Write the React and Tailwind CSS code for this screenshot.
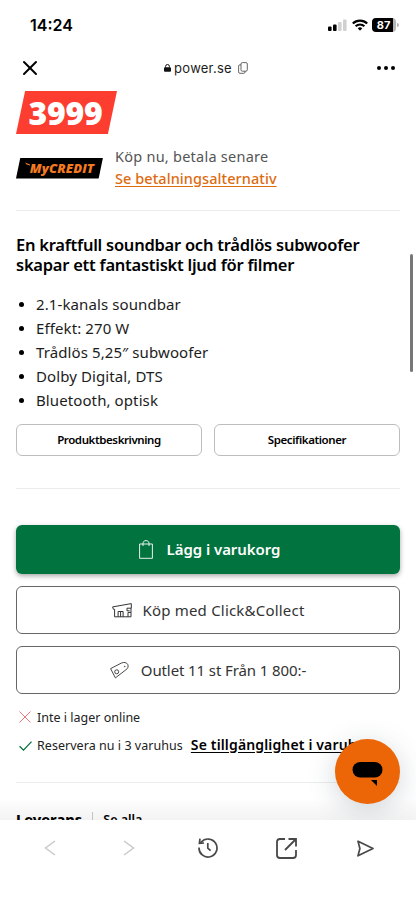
import { X } from "lucide-react";

const features = [
  "2.1-kanals soundbar",
  "Effekt: 270 W",
  "Trådlös 5,25″ subwoofer",
  "Dolby Digital, DTS",
  "Bluetooth, optisk",
];

function StatusBar() {
  return (
    <div className="flex h-[50px] shrink-0 items-center justify-between pl-[30px] pr-[17px] font-['Inter',sans-serif]">
      <span className="text-[16px] font-semibold leading-5">14:24</span>
      <div className="flex items-center">
        <svg className="h-3 w-[19px]" viewBox="0 0 19 12">
          <rect x="0" y="7.5" width="3.6" height="4.5" rx="1" fill="#000" />
          <rect x="5" y="5.5" width="3.6" height="6.5" rx="1" fill="#000" />
          <rect x="10" y="3" width="3.6" height="9" rx="1" fill="#d0d0d0" />
          <rect x="15" y="0.5" width="3.6" height="11.5" rx="1" fill="#d0d0d0" />
        </svg>
        <svg className="ml-[5px] h-3 w-4" viewBox="0 0 16 12" fill="none" stroke="#000" strokeWidth="2.1">
          <path d="M0.8 4.6a10.2 10.2 0 0 1 14.4 0" />
          <path d="M3.6 7.3a6.2 6.2 0 0 1 8.8 0" />
          <path d="M5.7 9.3a3.3 3.3 0 0 1 4.6 0L8 11.7z" fill="#000" stroke="none" />
        </svg>
        <div className="ml-1 flex h-[14px] w-[24px] items-center justify-center rounded-[4px] bg-linear-to-r from-black from-88% to-[#b5b5b5] to-88% pt-px pr-px text-[11px] font-bold leading-none text-white">
          87
        </div>
        <div className="ml-px h-1 w-[2px] rounded-r-full bg-[#b5b5b5]" />
      </div>
    </div>
  );
}

function BrowserBar() {
  return (
    <div className="flex h-9 shrink-0 items-center justify-between pl-[22px] pr-[21px]">
      <X className="h-4 w-4" strokeWidth={2} viewBox="4 4 16 16" overflow="visible" />
      <div className="flex items-center pr-[3px] font-['Inter',sans-serif] text-[13px] leading-5 tracking-[0.25px] text-[#1c1c1c]">
        <svg className="mr-[3px] h-2 w-[7px]" viewBox="0 0 7 8">
          <rect x="0" y="3.2" width="7" height="4.6" rx="1" fill="#111" />
          <path d="M1.6 3.6V2.4a1.9 1.9 0 0 1 3.8 0v1.2" fill="none" stroke="#111" strokeWidth="1" />
        </svg>
        <span>power.se</span>
        <svg className="ml-1.5 h-3 w-[10px]" viewBox="0 0 10 12" fill="none" stroke="#555" strokeWidth="0.9">
          <rect x="3" y="0.6" width="6.3" height="8.6" rx="1.4" />
          <path d="M3 2.8H1.9A1.3 1.3 0 0 0 .6 4.1v5.8a1.4 1.4 0 0 0 1.4 1.4h3.8a1.3 1.3 0 0 0 1.3-1.3v-.8" />
        </svg>
      </div>
      <div className="flex gap-[3px]">
        <span className="h-1 w-1 rounded-full bg-black" />
        <span className="h-1 w-1 rounded-full bg-black" />
        <span className="h-1 w-1 rounded-full bg-black" />
      </div>
    </div>
  );
}

function BagIcon() {
  return (
    <svg className="h-[19px] w-[14px]" viewBox="0 0 14 19" fill="none" stroke="#fff" strokeWidth="0.9">
      <path d="M.6 4h12.8v14.3H.6z" />
      <path d="M4 6V3.2C4 1.6 5.3.6 7 .6s3 1 3 2.6V6" />
    </svg>
  );
}

function StoreIcon() {
  return (
    <svg className="h-[15px] w-5" viewBox="0 0 20 15" fill="none" stroke="#333" strokeWidth="1">
      <path d="M2.6 6.3H1.4L.6 3.9 19.3.6v4.6H15v2.6" />
      <path d="M2.6 6.3v7.5h3.5V8.5h5v5.3M8.6 8.5v5.3M6.1 13.8H19V9.400h-3v4.400M19 5.200v4.200M15 7.800h2.600" />
    </svg>
  );
}

function TagIcon() {
  return (
    <svg className="h-[17px] w-[19px]" viewBox="0 0 19 17" fill="none" stroke="#333" strokeWidth="0.9">
      <path d="M.6 6.6 11.500 1c2.500-1.100 5-.6 6.200 1.400 1 2 .3 4-1.800 5.400L5.400 15.900z" />
      <circle cx="6.7" cy="9.8" r="2" />
      <circle cx="14.8" cy="4.5" r=".35" />
    </svg>
  );
}

function Toolbar() {
  return (
    <div className="flex h-20 shrink-0 items-start bg-white pl-[11px] pr-3 pt-[14px]">
      <div className="flex w-full justify-between">
        <div className="flex h-7 w-[78px] items-center justify-center">
          <svg className="h-4 w-3" viewBox="0 0 12 16" fill="none" stroke="#c9c9c9" strokeWidth="1.5">
            <path d="M11 1 1.500 8l9.500 7" />
          </svg>
        </div>
        <div className="flex h-7 w-[78px] items-center justify-center">
          <svg className="h-4 w-3" viewBox="0 0 12 16" fill="none" stroke="#c9c9c9" strokeWidth="1.5">
            <path d="m1 1 9.500 7L1 15" />
          </svg>
        </div>
        <div className="flex h-7 w-[78px] items-center justify-center">
          <svg className="h-5 w-5" viewBox="0 0 20 20" fill="none" stroke="#484848" strokeWidth="1.7">
            <path d="M1 9.500a9 9 0 1 0 2.200-5.400L1.500 5.200" />
            <path d="M2 .7 1.400 5.300 6 5M9.800 5v5.200l2.800 2.500" />
          </svg>
        </div>
        <div className="flex h-7 w-[78px] items-center justify-center">
          <svg className="h-[21px] w-[21px]" viewBox="0 0 21 21" fill="none" stroke="#484848" strokeWidth="1.8">
            <path d="M9 1H4a3 3 0 0 0-3 3v13a3 3 0 0 0 3 3h13a3 3 0 0 0 3-3v-5" />
            <path d="M12.500 1H20v7.500M19.500 1.500 9 12" />
          </svg>
        </div>
        <div className="flex h-7 w-[78px] items-center justify-center">
          <svg className="h-[17px] w-[17px]" viewBox="0 0 17 17" fill="none" stroke="#484848" strokeWidth="1.7" strokeLinejoin="round">
            <path d="M1 1.200 16 8.500 1 15.800 2.900 8.500z" />
          </svg>
        </div>
      </div>
    </div>
  );
}

export default function App() {
  return (
    <div className="relative flex h-[900px] w-[416px] flex-col overflow-hidden bg-white font-['Noto_Sans',sans-serif] text-black">
      <StatusBar />
      <BrowserBar />

      <main className="h-[734px] overflow-hidden px-4 pt-[5px]">
        {/* Price */}
        <div className="flex h-[43px] w-[101px] items-center justify-center bg-[#fc3d30] pr-0.5 [clip-path:polygon(9%_0,100%_0,91%_100%,0_100%)]">
          <span className="font-['Open_Sans',sans-serif] text-[32px] font-extrabold leading-none tracking-[-0.3px] text-white">3999</span>
        </div>

        {/* Credit offer */}
        <div className="mt-[11px] flex h-11 items-center">
          <div className="mt-0.5 flex h-[21px] w-[87px] items-center justify-center bg-black [clip-path:polygon(5%_0,100%_0,95%_100%,0_100%)]">
            <svg className="mb-2 h-1 w-[5px]" viewBox="0 0 5 4" fill="#f47a20">
              <path d="M0 .5 5 2.500v1L1.500 2.500z" />
            </svg>
            <span className="font-['Open_Sans',sans-serif] text-[13px] font-extrabold italic leading-none tracking-[0.1px] text-[#f47a20]">MyCREDIT</span>
          </div>
          <div className="ml-3 text-[14.5px] leading-[22px]">
            <p className="tracking-[0.25px] text-[#555]">Köp nu, betala senare</p>
            <a className="font-medium tracking-[0.07px] text-[#dd6b10] underline underline-offset-2">Se betalningsalternativ</a>
          </div>
        </div>

        <hr className="mt-[21px] border-[#ececec]" />

        <h1 className="mt-6 text-[16.5px] font-semibold leading-5 tracking-[-0.25px]">
          En kraftfull soundbar och trådlös subwoofer
          <br />
          skapar ett fantastiskt ljud för filmer
        </h1>

        <ul className="mt-[17px] text-[15px] leading-6 tracking-[0.1px] text-[#1c1c1c]">
          {features.map((feature) => (
            <li key={feature} className="flex items-center">
              <span className="ml-[3px] mr-[12px] mt-px h-[5px] w-[5px] rounded-full bg-black" />
              {feature}
            </li>
          ))}
        </ul>

        <div className="mt-3 grid grid-cols-2 gap-3 text-[11.5px] font-semibold tracking-[-0.4px]">
          <button className="h-8 rounded-md border border-[#bdbdbd]">Produktbeskrivning</button>
          <button className="h-8 rounded-md border border-[#bdbdbd]">Specifikationer</button>
        </div>

        <hr className="mt-8 border-[#ececec]" />

        {/* Purchase actions */}
        <div className="mt-9 flex flex-col gap-3 text-[15px] text-[#333]">
          <button className="flex h-[49px] items-center justify-center gap-[14px] rounded-md bg-[#00733e] pl-[3px] font-semibold text-white shadow-[0_2px_5px_rgba(0,0,0,0.35)]">
            <BagIcon />
            <span className="tracking-[-0.05px]">Lägg i varukorg</span>
          </button>
          <button className="flex h-12 items-center justify-center gap-[10px] rounded-md border border-[#666] pl-px">
            <StoreIcon />
            <span className="tracking-[0.2px]">Köp med Click&amp;Collect</span>
          </button>
          <button className="flex h-12 items-center justify-center gap-3 rounded-md border border-[#666]">
            <TagIcon />
            <span className="tracking-[-0.1px]">Outlet 11 st Från 1 800:-</span>
          </button>
        </div>

        {/* Availability */}
        <div className="mt-[14px] flex h-5 items-center text-[12.5px] text-[#222]">
          <svg className="ml-[3px] mr-1.5 mb-[3px] h-3 w-3" viewBox="0 0 12 12" stroke="#e36b6b" strokeWidth="0.9">
            <path d="m.5.5 11 11M11.5.5l-11 11" />
          </svg>
          <span>Inte i lager online</span>
        </div>
        <div className="mt-2 flex h-5 items-center whitespace-nowrap text-[12.5px] text-[#222]">
          <svg className="ml-[3px] mr-[5px] h-[10px] w-[13px]" viewBox="0 0 13 10" fill="none" stroke="#00733e" strokeWidth="1.3">
            <path d="m.6 5.2 3.9 3.9L12.500.6" />
          </svg>
          <span className="tracking-[0.04px]">Reservera nu i 3 varuhus</span>
          <a className="mb-1 ml-2 text-[14px] font-semibold tracking-[0.15px] text-black underline underline-offset-2">Se tillgänglighet i varuhus</a>
        </div>

        <hr className="mt-[26px] border-[#ececec]" />

        <div className="mt-[27px] flex h-5 items-center">
          <span className="text-[14.5px] font-extrabold">Leverans</span>
          <span className="ml-[10px] h-4 w-px bg-[#ccc]" />
          <span className="ml-[10px] text-[12.5px] font-semibold">Se alla</span>
        </div>
      </main>

      <Toolbar />

      {/* Page scroll position */}
      <div className="absolute left-[410px] top-[254px] h-[118px] w-[3px] rounded-full bg-[#777]" />

      {/* Fade above the toolbar */}
      <div className="pointer-events-none absolute inset-x-0 top-[798px] h-[22px] bg-linear-to-b from-transparent to-black/5" />

      {/* Chat launcher */}
      <div className="pointer-events-none absolute inset-x-0 top-[700px] h-[120px] overflow-hidden">
        <button className="pointer-events-auto absolute left-[335px] top-[39px] flex h-[65px] w-[65px] items-center justify-center rounded-full bg-[#ec6608] shadow-[0_6px_28px_rgba(40,70,80,0.22)]">
          <svg className="mt-[5px] h-[25px] w-[31px]" viewBox="0 0 31 25" fill="#000">
            <rect x="0.5" y="0" width="30" height="15.5" rx="7.75" />
            <path d="M19 18h6v6z" />
          </svg>
        </button>
      </div>
    </div>
  );
}
